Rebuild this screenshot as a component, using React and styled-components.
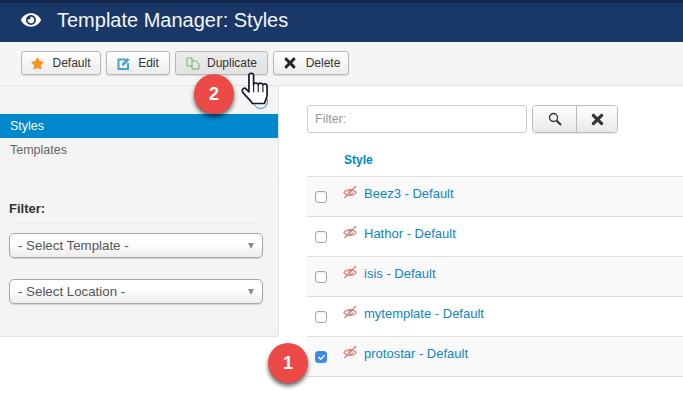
import React from "react";
import styled, { createGlobalStyle } from "styled-components";
import { FaStar, FaEye, FaTimes, FaCheck } from "react-icons/fa";

const Global = createGlobalStyle`
  html, body { margin: 0; padding: 0; background: #fff; overflow: hidden; }
  #root { width: 683px; height: 406px; overflow: hidden; position: relative; font-family: "Liberation Sans", Arial, sans-serif; }
`;
const Page = styled.div`position: relative; width: 683px; height: 406px; background: #fff;`;
const Header = styled.header`
  border-top: 3px solid #12274a; background: #1a3867; color: #fff;
  display: flex; align-items: center; padding: 0 0 5px 21px; box-sizing: border-box; height: 42px; gap: 16px;
`;
const Title = styled.h1`margin: 0; font-size: 20px; font-weight: 400; color: #f2f5f9;`;
const Toolbar = styled.div`
  height: 44px; box-sizing: border-box; background: #f5f5f5; border-bottom: 1px solid #e4e4e4;
  display: flex; align-items: flex-start; padding: 9px 0 0 21px; gap: 5px;
`;
const ToolButton = styled.button`
  width: ${p => p.$w}px; height: 24px; box-sizing: border-box; padding: 0; border: 1px solid #b9b9b9; border-radius: 3px;
  background: ${p => p.$active ? "linear-gradient(#ececec,#e2e2e2)" : "linear-gradient(#fff,#ececec)"};
  box-shadow: 0 1px 1px rgba(0,0,0,.12);
  display: flex; align-items: center; justify-content: center; gap: ${p => p.$gap || 8}px;
  font: 12px "Liberation Sans", Arial, sans-serif; color: #333;
`;
const Body = styled.div`display: grid; grid-template-columns: 279px 1fr; align-items: start;`;
const Sidebar = styled.aside`
  height: 251px; box-sizing: border-box; background: #f4f4f4; border-right: 1px solid #e3e3e3; border-bottom: 1px solid #e3e3e3;
  border-bottom-right-radius: 3px; padding-top: 28px;
`;
const NavItem = styled.div`
  height: 24px; line-height: 24px; padding-left: 10px; font-size: 12.5px;
  background: ${p => p.$active ? "#0088cc" : "transparent"}; color: ${p => p.$active ? "#fff" : "#666"};
`;
const SideRule = styled.div`height: 1px; background: #fbfbfb; margin-top: 19px;`;
const FilterBlock = styled.div`padding: 19px 15px 0 9px;`;
const FilterLabel = styled.div`
  font-size: 13px; font-weight: 700; color: #333; height: 21px; line-height: 15px; border-bottom: 1px solid #ededed;
`;
const SelectRow = styled.div`padding: 10px 0 10px; border-bottom: 1px solid #fbfbfb;`;
const SelectBox = styled.div`
  height: 25px; box-sizing: border-box; border: 1px solid #a8a8a8; border-radius: 5px; padding: 0 8px;
  background: linear-gradient(#fff 0%, #fff 40%, #ececec 100%); box-shadow: 0 1px 1px rgba(0,0,0,.15);
  display: flex; align-items: center; justify-content: space-between; font-size: 13.3px; color: #555;
`;
const Caret = styled.span`
  width: 0; height: 0; border-left: 3.500px solid transparent; border-right: 3.500px solid transparent; border-top: 6px solid #8a8a8a;
`;
const Main = styled.main`padding: 19px 0 0 28px;`;
const SearchBar = styled.div`display: flex; gap: 5px; height: 28px;`;
const FilterInput = styled.div`
  width: 220px; box-sizing: border-box; border: 1px solid #ccc; border-radius: 3px; padding-left: 7px;
  display: flex; align-items: center; font-size: 12.5px; color: #999; background: #fff;
`;
const BtnGroup = styled.div`
  display: flex; border: 1px solid #bbb; border-radius: 4px; overflow: hidden; box-shadow: 0 1px 1px rgba(0,0,0,.1);
`;
const GroupBtn = styled.div`
  width: ${p => p.$w}px; display: flex; align-items: center; justify-content: center; color: #333;
  background: linear-gradient(#fff,#e9e9e9); & + & { border-left: 1px solid #bbb; }
`;
const TableHead = styled.div`
  height: 44px; box-sizing: border-box; padding: 20px 0 0 37px; font-size: 12px; font-weight: 700; color: #0088cc; border-bottom: 1px solid #ddd; line-height: 14px;
`;
const Row = styled.div`
  height: 40px; box-sizing: border-box; border-bottom: 1px solid #ddd; background: ${p => p.$odd ? "#f9f9f9" : "#fff"};
  display: flex; align-items: flex-start; padding-left: 8px;
`;
const Check = styled.span`
  width: 12px; height: 12px; box-sizing: border-box; margin-top: 14px; border-radius: 3px; display: flex; align-items: center; justify-content: center;
  border: 1px solid ${p => p.$on ? "#3d8bf0" : "#a5a5a5"}; background: ${p => p.$on ? "#3d8bf0" : "#fff"};
  color: #fff; box-shadow: inset 0 1px 1px rgba(0,0,0,.06);
`;
const StyleLink = styled.a`
  display: flex; align-items: flex-start; color: #0f85c6; font-size: 13px; line-height: 15px; padding-top: 9px; margin-left: 16px; gap: 7px;
  svg { flex: none; margin-top: -1px; }
`;
const Badge = styled.div`
  position: absolute; left: ${p => p.$x}px; top: ${p => p.$y}px; width: 40px; height: 40px; border-radius: 50%;
  background: #eb4a46; color: #fff; font-size: 18px; font-weight: 700;
  display: flex; align-items: center; justify-content: center;
  box-shadow: 0 3px 4px rgba(0,0,0,.6);
`;
const Pointer = styled.svg`position: absolute; left: 236px; top: 69px;`;
const Ring = styled.span`
  position: absolute; left: 253px; top: 94px; width: 15px; height: 15px; box-sizing: border-box; border-radius: 50%; border: 1.500px solid #1b8fd6;
`;

const Duplicate = () => (
  <svg width="14" height="13" viewBox="0 0 14 13" fill="none" stroke="#6db36d" strokeWidth="1">
    <path d="M1 1h5v8H1z" /><path d="M6 4h4l3 3v5H6V9" />
  </svg>
);
const EditIcon = () => (
  <svg width="14" height="13" viewBox="0 0 14 13" fill="none">
    <path d="M9 2.500H1.500v9.500h9.500V6" stroke="#4aa3c8" strokeWidth="2" />
    <path d="M5 8.500V6.500L10.500 1l2 2L7 8.500z" fill="#4aa3c8" />
  </svg>
);
const SearchIcon = () => (
  <svg width="14" height="14" viewBox="0 0 14 14" fill="none" stroke="#333">
    <circle cx="5.500" cy="5.500" r="4" strokeWidth="1.300" />
    <path d="M8.500 8.500L13 13" strokeWidth="2" />
  </svg>
);
const HiddenEye = () => (
  <svg width="14" height="14" viewBox="0 0 14 14" fill="none" stroke="#d57f7b" strokeWidth="1.200">
    <path d="M.8 7.500C4 3.500 10 3.500 13.200 7.500C10 11.500 4 11.500 .8 7.500z" />
    <path d="M5 7.500a2.500 2.500 0 0 1 4 -1.500M9.500 7.500a2.500 2.500 0 0 1 -3.500 2" />
    <path d="M1.500 13L13 1" strokeWidth="1.300" />
  </svg>
);

const rows = ["Beez3", "Hathor", "isis", "mytemplate", "protostar"];

export default function App() {
  return (
    <Page>
      <Global />
      <Header>
        <FaEye size={20} />
        <Title>Template Manager: Styles</Title>
      </Header>
      <Toolbar>
        <ToolButton $w={80}><FaStar size={13} color="#f39322" />Default</ToolButton>
        <ToolButton $w={64} $gap={7}><EditIcon />Edit</ToolButton>
        <ToolButton $w={93} $gap={7} $active><Duplicate />Duplicate</ToolButton>
        <ToolButton $w={76}><FaTimes size={16} color="#222" />Delete</ToolButton>
      </Toolbar>
      <Body>
        <Sidebar>
          <NavItem $active>Styles</NavItem>
          <NavItem>Templates</NavItem>
          <SideRule />
          <FilterBlock>
            <FilterLabel>Filter:</FilterLabel>
            <SelectRow><SelectBox>- Select Template -<Caret /></SelectBox></SelectRow>
            <SelectRow><SelectBox>- Select Location -<Caret /></SelectBox></SelectRow>
          </FilterBlock>
        </Sidebar>
        <Main>
          <SearchBar>
            <FilterInput>Filter:</FilterInput>
            <BtnGroup>
              <GroupBtn $w={43}><SearchIcon /></GroupBtn>
              <GroupBtn $w={40}><FaTimes size={17} /></GroupBtn>
            </BtnGroup>
          </SearchBar>
          <TableHead>Style</TableHead>
          {rows.map((r, i) => (
            <Row key={r} $odd={i % 2 === 0}>
              <Check $on={r === "protostar"}>{r === "protostar" && <FaCheck size={7} />}</Check>
              <StyleLink><HiddenEye />{r} - Default</StyleLink>
            </Row>
          ))}
        </Main>
      </Body>
      <Ring />
      <Badge $x={194} $y={74}>2</Badge>
      <Badge $x={268} $y={343}>1</Badge>
      <Pointer width="38" height="41" viewBox="0 0 40 44">
        <path d="M13.500 7c0-3 5-3 5 0v10c0-1 1-2 2.500-2s2.500 1 2.500 2c.3-1 1.200-1.800 2.500-1.800s2.300 1 2.500 2c.3-.8 1-1.200 2-1.200 1.500 0 2.500 1 2.500 3v8c0 4-1.500 6-3 10H17c-1.500-4-9-9-10.500-13-.8-2.500 2-4.500 4-2.500l3 3z" fill="#fff" stroke="#111a2e" strokeWidth="1.800" strokeLinejoin="round" />
        <path d="M18.500 17v8M23.500 17v8M28.500 18v7" stroke="#111a2e" strokeWidth="1.200" />
      </Pointer>
    </Page>
  );
}
